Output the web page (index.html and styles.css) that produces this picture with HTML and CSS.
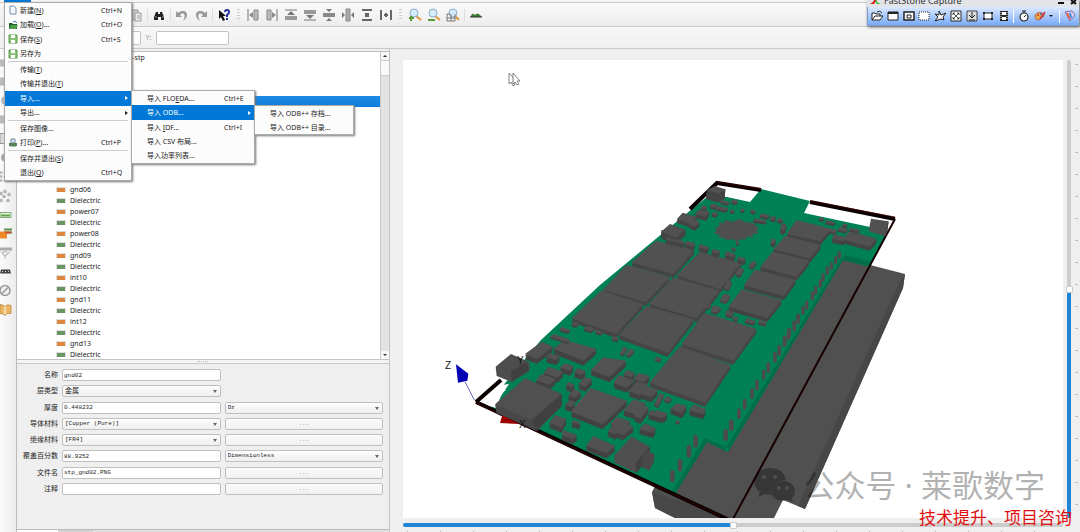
FILE: index.html
```html
<!DOCTYPE html>
<html lang="zh-CN">
<head>
<meta charset="utf-8">
<title>gnd02</title>
<link rel="stylesheet" href="styles.css">
</head>
<body>
<div class="app">
  <div class="menubar"><span class="menubar-active"></span></div>

  <div class="toolbar">
    <button class="tool" aria-label="粘贴"><svg viewBox="0 0 14 14"><path d="M2 2h7v10H2z" fill="#ccc" stroke="#999"/><path d="M6 5h6v8H6z" fill="#eee" stroke="#999"/><path d="M8 8h3M8 10h3" stroke="#999"/></svg></button>
    <i class="sep"></i>
    <button class="tool" aria-label="查找"><svg viewBox="0 0 14 14"><path d="M4 4h2v2h2V4h2l2 5v3H9V9H6v3H2V9z" fill="#222"/><path d="M4 8v2M11 8v2" stroke="#999"/></svg></button>
    <i class="sep"></i>
    <button class="tool" aria-label="撤销"><svg viewBox="0 0 14 14"><path d="M1 3v6h6L5 7c3-3 6-1 4 4l-1 2c6-4 5-11-1-10-2 0-3 1-4 2z" fill="#999"/></svg></button>
    <button class="tool" aria-label="重做"><svg viewBox="0 0 14 14"><path d="M13 3v6H7l2-2C6 4 3 6 5 11l1 2C0 9 1 2 7 3c2 0 3 1 4 2z" fill="#999"/></svg></button>
    <i class="sep"></i>
    <button class="tool" aria-label="这是什么"><svg viewBox="0 0 14 14"><path d="M2 2v9l2-2 2 4 2-1-2-4h3z" fill="#111"/><path d="M8 4q0-2 2-2t2 2-2 3v2M10 10v2" fill="none" stroke="#2330a0" stroke-width="2"/></svg></button>
    <i class="grip"></i>
    <button class="tool" aria-label="左对齐"><svg viewBox="0 0 14 14"><path d="M2 1v12" stroke="#777"/><path d="M8 2h4v10H8z" fill="#bbb" stroke="#888"/><path d="M7 4v6L3 7z" fill="#888"/></svg></button>
    <button class="tool" aria-label="右对齐"><svg viewBox="0 0 14 14"><path d="M12 1v12" stroke="#777"/><path d="M2 2h4v10H2z" fill="#bbb" stroke="#888"/><path d="M7 4v6l4-3z" fill="#888"/></svg></button>
    <button class="tool" aria-label="顶端对齐"><svg viewBox="0 0 14 14"><path d="M1 2h12" stroke="#777"/><path d="M1 8h12v4H1z" fill="#999"/><path d="M7 3l4 4H3z" fill="#777"/></svg></button>
    <button class="tool" aria-label="底端对齐"><svg viewBox="0 0 14 14"><path d="M1 12h12" stroke="#777"/><path d="M1 2h12v4H1z" fill="#999"/><path d="M7 11l4-4H3z" fill="#777"/></svg></button>
    <button class="tool" aria-label="垂直居中"><svg viewBox="0 0 14 14"><path d="M1 5h12v4H1z" fill="#888"/><path d="M7 4L4 1h6zM7 10l-3 3h6z" fill="#777"/></svg></button>
    <button class="tool" aria-label="水平居中"><svg viewBox="0 0 14 14"><path d="M5 1h4v12H5z" fill="#aaa" stroke="#888"/><path d="M4 7L1 4v6zM10 7l3-3v6z" fill="#777"/></svg></button>
    <button class="tool" aria-label="垂直分布"><svg viewBox="0 0 14 14"><path d="M2 2h10M2 12h10" stroke="#666" stroke-width="2"/><path d="M5 5h4v4H5z" fill="#666"/></svg></button>
    <button class="tool" aria-label="水平分布"><svg viewBox="0 0 14 14"><path d="M2 2v10M12 2v10" stroke="#666" stroke-width="2"/><path d="M7 5v4M5 7h4" stroke="#666" stroke-width="2"/></svg></button>
    <i class="grip"></i>
    <button class="tool" aria-label="放大"><svg viewBox="0 0 14 14"><path d="M8 8l5 4" stroke="#dd9a3c" stroke-width="2"/><circle cx="6" cy="5" r="4" fill="#d6ecfa" stroke="#8ab0cc"/><path d="M3 8v5M1 10h5" stroke="#5a9a32" stroke-width="2"/></svg></button>
    <button class="tool" aria-label="缩小"><svg viewBox="0 0 14 14"><path d="M8 8l5 4" stroke="#dd9a3c" stroke-width="2"/><circle cx="6" cy="5" r="4" fill="#d6ecfa" stroke="#8ab0cc"/><path d="M1 12h7" stroke="#5a9a32" stroke-width="2"/></svg></button>
    <button class="tool" aria-label="适合窗口"><svg viewBox="0 0 14 14"><path d="M9 8l4 4" stroke="#dd9a3c" stroke-width="2"/><circle cx="7" cy="5" r="4" fill="#d6ecfa" stroke="#8ab0cc"/><path d="M1 6h3M1 6v7h8V6M1 10h8M5 6v7" fill="none" stroke="#777"/></svg></button>
    <i class="sep"></i>
    <button class="tool" aria-label="网格"><svg viewBox="0 0 14 14"><path d="M2 8q1-4 4-1 2-3 5 0l2 2H1z" fill="#3e7d35"/><path d="M1 9h12" stroke="#333"/></svg></button>
  </div>

  <div class="coordbar">
    <input class="coord coord-x" aria-label="X">
    <label class="coord-label" for="coord-y">Y:</label>
    <input class="coord" id="coord-y">
  </div>

  <div class="work">
    <div class="rail">
      <svg viewBox="0 0 14 14"><path d="M0 4h10v7H0z" fill="#bbb"/></svg>
      <svg viewBox="0 0 14 14"><path d="M0 3h9v8H0z" fill="#bbb"/></svg>
      <svg viewBox="0 0 14 14"><circle cx="5" cy="7" r="4" fill="#bbb"/></svg>
      <svg viewBox="0 0 14 14"><path d="M0 3h8v8H0z" fill="#bbb"/></svg>
      <svg viewBox="0 0 14 14"><path d="M0 2h8v10H0z" fill="#ddd" stroke="#999"/></svg>
      <svg viewBox="0 0 14 14"><circle cx="5" cy="7" r="4" fill="#aaa"/></svg>
      <svg viewBox="0 0 14 14"><g fill="#bbb"><circle cx="1" cy="3" r="1.500"/><circle cx="5" cy="3" r="1.500"/><circle cx="10" cy="3" r="1.500"/><circle cx="1" cy="7" r="1.500"/><circle cx="5" cy="7" r="1.500"/><circle cx="10" cy="7" r="1.500"/><circle cx="1" cy="11" r="1.500"/><circle cx="5" cy="11" r="1.500"/><circle cx="10" cy="11" r="1.500"/></g></svg>
      <svg viewBox="0 0 14 14"><g fill="#bbb" stroke="#999" stroke-width=".5"><circle cx="1" cy="5" r="1.500"/><circle cx="5" cy="3" r="1.500"/><circle cx="9" cy="6" r="1.500"/><circle cx="4" cy="8" r="1.500"/><circle cx="1" cy="12" r="1.500"/><circle cx="8" cy="12" r="1.500"/></g></svg>
      <svg viewBox="0 0 14 14"><path d="M0 5h11v5H0z" fill="#e6f3df" stroke="#8aa884"/><path d="M1 8h9" stroke="#5aa846" stroke-width="2"/></svg>
      <svg viewBox="0 0 14 14"><path d="M4 3h8M4 6h8" stroke="#5c9348" stroke-width="2"/><path d="M0 5h7v7H0z" fill="#f08a28"/><path d="M5 6h6" stroke="#d04f2a" stroke-width="2"/></svg>
      <svg viewBox="0 0 14 14"><path d="M0 2h12v3H0z" fill="#aaa"/><path d="M1 6q4 7 9 0M5 7v6" fill="none" stroke="#aaa"/><circle cx="5" cy="8" r="2" fill="#fff" stroke="#aaa"/></svg>
      <svg viewBox="0 0 14 14"><path d="M0 9l1-4h9l1 4z" fill="#444"/><path d="M2 7h1M5 7h1M8 7h1" stroke="#ddd"/></svg>
      <svg viewBox="0 0 14 14"><circle cx="5" cy="7" r="5" fill="#eee" stroke="#999" stroke-width="1.500"/><path d="M2 10l6-6" stroke="#999" stroke-width="1.500"/></svg>
      <svg viewBox="0 0 14 14"><path d="M0 2q3 0 5 2 2-3 6-1v8q-4-1-6 2-2-2-5-2z" fill="#eab766" stroke="#b67c34" stroke-width=".7"/><path d="M5 4v8" stroke="#fff"/></svg>
    </div>

    <div class="dock">
      <div class="tree-frame">
        <ul class="tree">
          <li class="root">z-stp</li><li></li><li></li><li></li>
          <li class="selected"></li><li></li><li></li><li></li><li></li><li></li><li></li>
          <li class="diel">Dielectric</li>
          <li class="metal">gnd06</li><li class="diel">Dielectric</li>
          <li class="metal">power07</li><li class="diel">Dielectric</li>
          <li class="metal">power08</li><li class="diel">Dielectric</li>
          <li class="metal">gnd09</li><li class="diel">Dielectric</li>
          <li class="metal">int10</li><li class="diel">Dielectric</li>
          <li class="metal">gnd11</li><li class="diel">Dielectric</li>
          <li class="metal">int12</li><li class="diel">Dielectric</li>
          <li class="metal">gnd13</li><li class="diel">Dielectric</li>
        </ul>
        <div class="scrollbar"><button class="arrow up" aria-label="向上"></button><span class="scroll-thumb"></span><button class="arrow down" aria-label="向下"></button></div>
      </div>
      <div class="splitter"><i></i></div>
      <form class="props">
        <label for="f1">名称</label><input id="f1" value="gnd02"><span></span>
        <label for="f2">层类型</label><div class="combo cjk"><select id="f2"><option>金属</option></select></div><span></span>
        <label for="f3">厚度</label><input id="f3" value="0.448232"><div class="combo"><select aria-label="厚度单位"><option>Oz</option></select></div>
        <label for="f4">导体材料</label><div class="combo"><select id="f4"><option>[Copper (Pure)]</option></select></div><button type="button">...</button>
        <label for="f5">绝缘材料</label><div class="combo"><select id="f5"><option>[FR4]</option></select></div><button type="button">...</button>
        <label for="f6">覆盖百分数</label><input id="f6" value="88.9252"><div class="combo"><select aria-label="覆盖单位"><option>Dimensionless</option></select></div>
        <label for="f7">文件名</label><input id="f7" value="stp_gnd02.PNG"><button type="button">...</button>
        <label for="f8">注释</label><input id="f8"><button type="button">...</button>
      </form>
      <div class="tabs"><i class="tab-on"></i><i class="tab-off"></i></div>
    </div>

    <div class="view">
      <div class="canvas">
        <svg class="scene" viewBox="403 60 660 458" preserveAspectRatio="xMidYMid slice">
          <defs>
            <path id="chips" d="M468 32L583 60 520 132 395 97ZM600 66L724 98 660 178 530 136ZM380 104L510 142 438 216 308 180ZM520 142L658 182 590 265 447 222ZM303 182L430 222 348 312 215 265ZM440 228L581 268 503 368 356 315ZM612 248L770 296 700 392 545 343ZM540 348L692 405 615 518 448 458Z"/>
            <path id="mid" d="M195 330L290 357 250 392 160 356ZM125 335L160 350 110 386 75 372ZM148 370l32 8-12 12-30-8ZM310 382L380 392 328 442 272 420ZM272 474L382 512 308 583 213 545ZM484 0L560 0 530 22 484 12ZM145 410l45 15-18 18-42-14ZM125 432l42 15-18 18-42-14ZM380 420l25 8-10 14-26-8ZM355 435l48 16-22 22-40-14ZM415 428l34 10-16 18-32-8ZM412 452l34 14-26 30-34-12ZM444 470l30 10-20 22-30-10ZM400 508l38 12-30 34-38-12ZM425 525l22 8-26 34-18-8ZM470 540l32 10-10 14-32-8ZM530 520l30 8-14 22-36-14ZM582 523l35 14-8 16-42-12ZM350 560l42 14-26 22-34-14ZM195 400l26 8-12 14-30-10ZM232 415l26 8-12 12-24-8ZM255 442l22 6-20 22-22-8ZM205 456l20 8-10 8-18-6ZM222 478l22 8-18 18-22-8ZM210 510l16 6-10 16-22-8Z"/>
            <path id="tiny" d="M528 28l22 6-8 10-24-6ZM560 34l24 6-8 10-24-6ZM603 46l24 6-6 12-24-6ZM640 58l20 6-6 8-20-6ZM682 65l25 8-8 10-25-8ZM718 80l18 5-6 8-18-5ZM760 92l10 4-14 14-10-4ZM718 112l14 5-12 20-14-5ZM682 150l14 5-10 24-14-5ZM672 190l20 7-14 20-18-6ZM640 225l24 8-14 16-18-5ZM680 240l22 6-8 14-18-6ZM740 264l26 8-6 10-26-8ZM778 270l22 6-6 8-20-6ZM220 275l16 5-8 8-14-5ZM258 288l24 6-6 10-24-6ZM290 300l18 6-5 5-18-5ZM186 290l26 10-12 6-22-9ZM162 312l46 16-6 8-52-16ZM340 318l16 6-5 7-16-5ZM370 350l12 5-12 18-10-4ZM390 356l14 6-16 16-10-4ZM470 380l14 5-6 7-14-5ZM480 490l12 4-18 34-12-5ZM500 500l16 5-10 10-14-5ZM530 570l10 3-5 5-9-3ZM700 258l15 5-5 8-12-4ZM625 222l9 3-9 10-9-4Z"/>
            <path id="far" d="M470 180L573 206 540 244 440 222ZM435 228L543 254 510 296 400 268ZM398 275L508 302 470 350 360 322ZM345 328L467 360 432 408 312 376ZM305 388L425 420 382 474 265 440ZM630 213L710 236 690 260 608 238ZM90 192L135 208 108 234 65 214ZM128 158L172 172 150 190 110 178ZM155 178l25 8-15 14-20-8ZM582 222l36 10-8 12-34-8ZM180 146l28 8-10 16-34-8ZM82 230l22 8-6 8-22-8ZM108 236l25 8-6 8-25-8ZM140 242l25 8-6 10-25-8ZM180 252l25 8-4 10-25-8ZM220 267l20 6-6 8-20-6ZM260 274l26 8-6 10-26-8ZM297 290l20 6-6 8-20-6ZM426 188l14 6-8 20-12-6ZM396 235l12 4-8 12-8-4Z"/>
            <path id="dust" d="M245 120l24 6-6 6-24-6ZM280 118l14 4-6 8-16-4ZM215 130l20 5-8 10-18-5ZM235 138l30 6-8 8-30-6ZM190 135l12 4-8 9-12-4ZM220 155l14 4-6 8-14-4ZM365 160l25 5-8 8-24-5ZM395 168l14 3-6 10-14-3ZM415 174l14 4-5 7-14-3ZM345 175l36 7-8 6-34-6ZM335 148l12 4-5 6-12-4ZM305 145l9 3-4 6-9-3ZM275 148l10 3-8 6-8-3ZM560 180l26 7-6 6-25-6ZM540 172l12 3-4 5-12-3ZM570 205l22 6-8 8-20-5ZM600 200l24 6-7 9-24-6ZM632 203l28 7-5 5-30-7ZM610 190l13 3-4 6-13-3ZM290 245l8 3-3 5-8-3ZM278 262l10 4-4 4-10-4ZM335 305l14 5-12 13-10-4Z"/>
            <path id="near" d="M490 288L556 318 530 340 468 318ZM375 225l34 12-15 26-36-15ZM400 270l42 16-14 12-32-12ZM645 250l32 14-8 15-42-12ZM575 245l36 15-32 26-24-10ZM555 250l24 8-22 26-24-10ZM665 210l35 14-8 10-38-12ZM430 240l22 7-6 6-22-7Z"/>
          </defs>
          <!-- enclosure slab under the board -->
          <path d="M843 258L905 274 903 288 805 509 783 500 774 518H675L655 508 652 492 690 420Z" fill="#505050"/>
          <path d="M905 274L903 288 805 509 798 506 898 285Z" fill="#474747"/>
          <path d="M652 492L735 518H675L655 508Z" fill="#484848"/>
          <!-- board -->
          <path d="M761 189L810 201 804 213 870 227 888 231 870 267 843 260 728 452 707 442 675 494 484 405 506 390 501 388 541 340 600 285 692 209 707 197 727 197 750 202Z" fill="#008055"/>
          <path d="M485 405L501 385 509 384 501 396 496 408Z" fill="#fff"/>
          <path d="M843 260L870 267 872 262 845 255 838 264 725 449 728 452ZM707 442L675 494 672 491 705 438 728 448V452Z" fill="#006f49"/>
          <!-- bounding frame -->
          <path d="M761 190L717 183 690 209M810 202L895 219M501 380L476 402" fill="none" stroke="#0a0000" stroke-width="4"/>
          <path d="M476 402L727 519" fill="none" stroke="#0a0000" stroke-width="4"/>
          <path d="M895 219L733 519" fill="none" stroke="#160000" stroke-width="2"/>
          <path d="M717 182L761 189M810 201L895 217M476 403L720 516" fill="none" stroke="#500" stroke-width=".6"/>

          <!-- memory packages and central components -->
          <g transform="translate(500 230) scale(.3333)">
            <g fill="#454545"><use href="#chips" y="12"/><use href="#chips" y="8"/><use href="#chips" y="4"/></g>
            <use href="#chips" fill="#515151"/>
            <g fill="#424242"><use href="#mid" y="15"/><use href="#mid" y="10"/><use href="#mid" y="5"/></g>
            <use href="#mid" fill="#525252"/>
            <g fill="#444"><use href="#tiny" y="6"/><use href="#tiny" y="3"/></g>
            <use href="#tiny" fill="#525252"/>
            <path d="M895 256v18M883 276v19M868 298v20M855 322v20M838 350v22M825 371v22M805 402v22M791 424v20M771 454v22M756 480v22M734 512v22M717 540v22M693 573v22" stroke="#4c4c4c" stroke-width="11" stroke-linecap="round"/>
          </g>

          <!-- far end -->
          <g transform="translate(640 160) scale(.3333)">
            <g fill="#444"><use href="#far" y="12"/><use href="#far" y="8"/><use href="#far" y="4"/></g>
            <use href="#far" fill="#515151"/>
            <path d="M225 78L256 88 254 116 234 128 198 117 201 90ZM693 176L746 184 742 214 735 229 686 214Z" fill="#505050"/>
            <path d="M256 88L235 101 234 128 254 116ZM746 184L738 202 735 229 742 214ZM201 90l34 11v27l-36-11Z" fill="#444"/>
            <path d="M238 188l14 2 5-10 20 6 20-8 18 8 32 5-3 8 13 2-8 12 6 5-20 5 4 8-18-2-6 10-16-2-6 9-16-9-16 3-8-6-18-2 7-8-19-3 8-10-6-8 14-4Z" fill="#4f4f4f" stroke="#405a50" stroke-dasharray="5 3" stroke-width="3"/>
            <g fill="#444"><use href="#dust" y="6"/><use href="#dust" y="3"/></g>
            <use href="#dust" fill="#525252"/>
            <path d="M598 278v14M587 293v15M574 311v15M562 324v16M549 344v16M541 362v16M527 382v18M517 398v19M500 426v18M489 442v18M474 470v18M463 492v18M445 516v20M433 536v20" stroke="#4c4c4c" stroke-width="10" stroke-linecap="round"/>
          </g>

          <!-- near corner -->
          <g transform="translate(430 340) scale(.3333)">
            <path d="M78 73L115 101 112 122 84 128Z" fill="#0000b4"/><path d="M105 125L133 180" stroke="#6868c0" stroke-width="3"/>
            <path d="M217 225L268 252 210 249Z" fill="#900"/>
            <path d="M243 42L298 66 299 92 245 126 200 108 197 80Z" fill="#4d4d4d"/><path d="M290 66L298 90 245 126 243 95Z" fill="#404040"/>
            <path d="M285 115L395 162 396 195 322 272 200 218 196 192Z" fill="#505050"/><path d="M395 162L396 198 318 272 305 240Z" fill="#404040"/><path d="M196 194l110 46 12 32-118-54Z" fill="#484848"/>
            <g fill="#424242"><use href="#near" y="15"/><use href="#near" y="10"/><use href="#near" y="5"/></g>
            <use href="#near" fill="#515151"/>
            <path d="M605 290L660 320 658 345 620 398 553 368V345Z" fill="#4f4f4f"/><path d="M660 320V345L620 398 615 370Z" fill="#414141"/><path d="M650 328l24 16-2 20-14 28-25-12 5-30Z" fill="#494949"/>
            <path d="M797 292v24M777 322v24M750 364v24M727 396v24M887 274v22M904 246v20" stroke="#4c4c4c" stroke-width="14" stroke-linecap="round"/>
          </g>
          <g class="axis"><text x="445" y="369">Z</text><text x="517" y="364">Y</text><text x="519" y="428">X</text></g>
          <g fill="#fff" stroke="#666" stroke-width=".8"><path d="M509 73v11l2-2 2 4 2-1-2-4h3z"/><path d="M513 73v11l2-2 2 3 2-1-2-3h3z"/></g>
        </svg>
      </div>
      <input class="slider slider-v" type="range" value="50" aria-label="垂直旋转">
      <div class="ticks-v"></div>
      <input class="slider slider-h" type="range" value="50" aria-label="水平旋转">
      <div class="ticks-h"></div>
    </div>
  </div>
</div>

<div class="watermark">
  <svg viewBox="0 0 42 34"><path fill-rule="evenodd" d="M16 0C7 0 0 6 0 13q0 7 6 11L4 29l7-3 6 1q-1-14 15-15Q29 0 16 0zM10 7a2 2 0 1 1 0 4 2 2 0 0 1 0-4zm11 0a2 2 0 1 1 0 4 2 2 0 0 1 0-4z"/><path fill-rule="evenodd" d="M29 13C21 13 17 18 17 23s5 10 12 10l5-1 5 2-1-4q3-3 3-7c0-5-5-10-12-10zm-4 5a2 2 0 1 1 0 4 2 2 0 0 1 0-4zm8 0a2 2 0 1 1 0 4 2 2 0 0 1 0-4z"/></svg>
  <span>公众号 · 莱歌数字</span>
</div>
<div class="slogan">技术提升、项目咨询</div>

<ul class="menu menu-file">
  <li><button><svg viewBox="0 0 10 10"><path d="M2 1h4l2 2v6H2z" fill="#f4f8fd" stroke="#7a8fae"/></svg><span>新建(<u>N</u>)</span><kbd>Ctrl+N</kbd></button></li>
  <li><button><svg viewBox="0 0 10 10"><path d="M1 3h3l1 1h4v5H1z" fill="#1f5c2a"/><path d="M3 5h7L8 9H1z" fill="#4da04a"/><path d="M5 2q2-2 4 1" stroke="#3b79a8" fill="none"/></svg><span>加载(<u>O</u>)...</span><kbd>Ctrl+O</kbd></button></li>
  <li><button><svg viewBox="0 0 10 10"><path d="M1 1h8v8H1z" fill="#8dc47c" stroke="#5a9a4c"/><path d="M3 1h4v3H3zM3 6h4v3H3z" fill="#fff"/></svg><span>保存(<u>S</u>)</span><kbd>Ctrl+S</kbd></button></li>
  <li><button><svg viewBox="0 0 10 10"><path d="M1 1h8v8H1z" fill="#8dc47c" stroke="#5a9a4c"/><path d="M3 1h4v3H3zM3 6h4v3H3z" fill="#fff"/></svg><span>另存为</span></button></li>
  <li class="rule"></li>
  <li><button><span>传输(<u>T</u>)</span></button></li>
  <li><button><span>传输并退出(<u>T</u>)</span></button></li>
  <li class="on sub"><button><span>导入...</span></button></li>
  <li class="sub"><button><span>导出...</span></button></li>
  <li class="rule"></li>
  <li><button><span>保存图像...</span></button></li>
  <li><button><svg viewBox="0 0 10 10"><path d="M3 1h4v4H3z" fill="#cfe3f5" stroke="#789"/><path d="M1 5h8v3H1z" fill="#5d7f5a"/><path d="M2 8h6v1H2z" fill="#9c9"/></svg><span>打印(<u>P</u>)...</span><kbd>Ctrl+P</kbd></button></li>
  <li class="rule"></li>
  <li><button><span>保存并退出(<u>S</u>)</span></button></li>
  <li><button><span>退出(<u>Q</u>)</span><kbd>Ctrl+Q</kbd></button></li>
</ul>
<ul class="menu menu-import">
  <li><button><span>导入 FLO<u>E</u>DA...</span><kbd>Ctrl+E</kbd></button></li>
  <li class="on sub"><button><span>导入 ODB...</span></button></li>
  <li><button><span>导入 <u>I</u>DF...</span><kbd>Ctrl+I</kbd></button></li>
  <li><button><span>导入 CSV 布局...</span></button></li>
  <li><button><span>导入功率列表...</span></button></li>
</ul>
<ul class="menu menu-odb">
  <li><button><span>导入 ODB++ 存档...</span></button></li>
  <li><button><span>导入 ODB++ 目录...</span></button></li>
</ul>

<div class="capture">
  <div class="capture-title"><svg viewBox="0 0 12 4"><path d="M0 4q4-1 5-4h3L5 4z" fill="#d22"/><path d="M7 0q1 3 5 4H8L6 1z" fill="#2b2"/></svg><span>FastStone Capture</span><svg class="win" viewBox="0 0 22 7"><path d="M1 3h6" stroke="#111" stroke-width="2"/><path d="M14 0l5 4M19 0l-5 4" stroke="#111" stroke-width="2"/></svg></div>
  <div class="capture-tools">
    <button aria-label="打开"><svg viewBox="0 0 12 12"><path d="M1 10V3h3l1 1h4v2M1 10l3-4h8l-3 4zM6 2q3-2 5 1" fill="#fff" stroke="#222"/></svg></button>
    <button aria-label="活动窗口"><svg viewBox="0 0 12 12"><path d="M1 2h10v8H1z" fill="#fff" stroke="#222"/><path d="M1 3h10" stroke="#222" stroke-width="2"/></svg></button>
    <button aria-label="窗口对象"><svg viewBox="0 0 12 12"><path d="M1 2h10v8H1z" fill="#fff" stroke="#222" stroke-width="1.500"/><path d="M4 5h4v3H4z" fill="#fff" stroke="#222"/></svg></button>
    <button aria-label="矩形区域"><svg viewBox="0 0 12 12"><path d="M1 2h10v8H1z" fill="#fff" stroke="#222" stroke-dasharray="1 1"/></svg></button>
    <button aria-label="手绘区域"><svg viewBox="0 0 12 12"><path d="M5 1l2 4 5-2-3 4 1 3-3-1-6 2 3-4-3-3 4 1z" fill="#fff" stroke="#222"/></svg></button>
    <button aria-label="全屏"><svg viewBox="0 0 12 12"><path d="M1 1h10v10H1z" fill="#fff" stroke="#222"/><path d="M3 5V3h2M7 3h2v2M9 7v2H7M5 9H3V7M3 3l6 6M9 3L3 9" fill="none" stroke="#222" stroke-width=".8"/></svg></button>
    <button aria-label="滚动窗口"><svg viewBox="0 0 12 12"><path d="M1 1h10v10H1z" fill="#ddd" stroke="#444"/><path d="M6 2v6M3 5l3 3 3-3M3 10h6" fill="none" stroke="#222"/></svg></button>
    <button aria-label="固定区域"><svg viewBox="0 0 12 12"><path d="M2 3h8v6H2z" fill="#fff" stroke="#222"/><path d="M1 2h2v2H1zM9 2h2v2H9zM1 8h2v2H1zM9 8h2v2H9z" fill="#222"/></svg></button>
    <button aria-label="录屏"><svg viewBox="0 0 12 12"><path d="M2 1h8v10H2z" fill="#222"/><path d="M4 2h4v3H4zM4 7h4v3H4z" fill="#fff"/><path d="M3 2v8M9 2v8" stroke="#fff" stroke-dasharray="1 1"/></svg></button>
    <i></i>
    <button aria-label="延时"><svg viewBox="0 0 12 12"><circle cx="6" cy="7" r="4" fill="#fff" stroke="#222" stroke-width="1.200"/><path d="M6 7l2-2M4 1h4M6 1v2" stroke="#222"/></svg></button>
    <button aria-label="输出"><svg viewBox="0 0 12 12"><path d="M1 6c0-4 8-5 9-1 1 3-3 1-3 3s-6 4-6-2z" fill="#e9a64a" stroke="#a66"/><circle cx="4" cy="5" r="1" fill="#d33"/><circle cx="7" cy="4" r="1" fill="#36c"/><path d="M11 2L6 9" stroke="#c33" stroke-width="1.500"/></svg></button>
    <b></b>
    <i></i>
    <button aria-label="设置"><svg viewBox="0 0 12 12"><path d="M1 2l7-1 3 4-5 6z" fill="#d9d4f2" stroke="#86a"/><path d="M3 3l3 6" stroke="#e64" stroke-width="2"/><path d="M6 3l1 5" stroke="#48d" stroke-width="2"/></svg></button>
  </div>
</div>
</body>
</html>
```
FILE: styles.css
```css
* { box-sizing: border-box; }

body {
  margin: 0;
  background: #efefef;
  color: #222;
  font: 7px/11px "Noto Sans", "Noto Sans CJK SC", sans-serif;
  overflow: hidden;
}

button, input, select { font: inherit; color: inherit; margin: 0; padding: 0; }
ul { list-style: none; margin: 0; padding: 0; }
svg { display: block; }

.app { display: flex; flex-direction: column; height: 100vh; }

.menubar { height: 3px; padding-left: 4px; background: #f5f5f5; border-bottom: 1px solid #c9c9c9; }
.menubar-active { display: block; width: 27px; height: 2px; background: #0078d7; }

.toolbar {
  display: flex;
  align-items: center;
  height: 24px;
  padding: 0 0 0 126px;
  background: linear-gradient(#fafafa, #ededed);
  border-bottom: 1px solid #c9c9c9;
}
.tool { display: grid; place-items: center; width: 19px; height: 20px; border: 0; background: none; }
.tool svg { width: 14px; height: 14px; }
.sep { width: 4px; height: 12px; background: linear-gradient(#ddd, #ddd) center / 1px 100% no-repeat; }
.grip { width: 10px; height: 12px; background: repeating-linear-gradient(#ccc 0 1px, transparent 1px 3px) center / 3px 100% no-repeat; }

.coordbar {
  display: flex;
  align-items: center;
  height: 22px;
  padding-left: 68px;
  background: linear-gradient(#f8f8f8, #efefef);
  border-bottom: 1px solid #c9c9c9;
}
.coord { width: 73px; height: 14px; background: #fff; border: 1px solid #c4c4c4; border-radius: 2px; }
.coord-label { width: 15px; text-align: center; color: #999; }

.work { flex: 1; min-height: 0; display: grid; grid-template-columns: 16px minmax(0, 374fr) minmax(0, 690fr); }

.rail { display: flex; flex-direction: column; padding-top: 4px; background: linear-gradient(to right, #fafafa, #ececec); overflow: hidden; }
.rail svg { flex: none; width: 14px; height: 19px; }

.dock { display: flex; flex-direction: column; min-height: 0; padding-top: 2px; border-left: 1px solid #bbb; border-right: 1px solid #c4c4c4; }
.tree-frame { flex: 1; min-height: 0; display: flex; background: #fff; border-top: 1px solid #bbb; border-bottom: 1px solid #c4c4c4; }
.tree { flex: 1; overflow: hidden; }
.tree li { display: flex; align-items: center; gap: 4px; height: 11px; padding-left: 39px; white-space: nowrap; }
.tree .root { padding-left: 112px; }
.tree .selected { background: linear-gradient(#1c8ae4, #0f7ddb); }
.tree .metal::before, .tree .diel::before { content: ""; width: 8px; height: 4px; border: 1px solid #ddd; border-bottom: 0; }
.tree .metal::before { background: #dd8740; }
.tree .diel::before { background: #689560; }

.scrollbar { display: flex; flex-direction: column; width: 9px; background: #e3e3e3; border-left: 1px solid #c9c9c9; }
.scroll-thumb { height: 16px; background: #fafafa; border: 1px solid #ccc; border-width: 1px 0; }
.arrow { display: grid; place-items: center; height: 8px; background: #f7f7f7; border: 0; }
.arrow::before { content: ""; border: 2px solid transparent; }
.arrow.up::before { border-top-width: 0; border-bottom-color: #333; }
.arrow.down { margin-top: auto; }
.arrow.down::before { border-bottom-width: 0; border-top-color: #333; }

.splitter { display: grid; place-items: center; height: 3px; background: #f4f4f4; }
.splitter i { width: 10px; border-top: 1px dotted #bbb; }

.props {
  display: grid;
  grid-template-columns: 41px minmax(0, 1fr) minmax(0, 1fr);
  grid-auto-rows: 12px;
  align-content: space-between;
  column-gap: 4px;
  height: 167px;
  padding: 5px 6px 34px 0;
  border-top: 1px solid #c9c9c9;
  border-bottom: 1px solid #bbb;
}
.props label { text-align: right; line-height: 12px; white-space: nowrap; }
.props input, .props select, .props button {
  width: 100%;
  height: 12px;
  border: 1px solid #c0c0c0;
  border-radius: 2px;
  font: 6px/10px "Liberation Mono", "Noto Sans CJK SC", monospace;
}
.props input { background: #fff; padding: 0 1px; }
.props select { appearance: none; background: linear-gradient(#fdfdfd, #efefef); padding: 0 2px; display: block; }
.props .cjk select { font-size: 7px; }
.props button { background: linear-gradient(#fbfbfb, #f0f0f0); color: #888; }
.combo { position: relative; }
.combo::after { content: ""; position: absolute; right: 4px; top: 5px; border: 2px solid transparent; border-top: 3px solid #666; border-bottom: 0; }

.tabs { display: flex; height: 2px; background: #e0e0e0; }
.tab-on { width: 41px; background: #fff; }
.tab-off { width: 35px; background: #d0d0d0; }

.view {
  display: grid;
  grid-template: minmax(0, 1fr) 14px / minmax(0, 1fr) 12px 5px;
  min-height: 0;
  padding: 11px 0 0 13px;
}
.canvas { background: #fff; overflow: hidden; }
.scene { width: 100%; height: 100%; }
.axis { font: 10px "Liberation Sans", sans-serif; fill: #111; }

.slider { appearance: none; margin: 0; border-radius: 2px; }
.slider::-webkit-slider-thumb { appearance: none; width: 7px; height: 7px; background: #fff; border: 1px solid #ccc; border-radius: 1px; }
.slider-v { writing-mode: vertical-lr; direction: rtl; width: 4px; height: 100%; justify-self: center; background: linear-gradient(#ccc 50%, #1f86d8 50%); }
.slider-h { width: 100%; height: 4px; align-self: center; grid-row: 2; grid-column: 1; background: linear-gradient(to right, #1f86d8 50%, #ccc 50%); }
.ticks-v { background: repeating-linear-gradient(transparent 0 4px, #bbb 4px 5px, transparent 5px 22px) left / 3px 100% no-repeat; }
.ticks-h { grid-row: 2; grid-column: 1; align-self: end; height: 1px; background: repeating-linear-gradient(to right, transparent 0 4px, #bbb 4px 5px, transparent 5px 33px); }

.menu {
  position: absolute;
  display: flex;
  flex-direction: column;
  background: #fcfcfc;
  border: 1px solid #aaa;
  box-shadow: 1px 1px 2px #777;
}
.menu li { flex: 1; display: flex; }
.menu .rule { flex: none; height: 1px; margin: 0 3px; background: #ccc; }
.menu button { flex: 1; display: flex; align-items: center; padding: 0 6px 0 15px; border: 0; background: none; text-align: left; white-space: nowrap; position: relative; }
.menu svg { position: absolute; left: 3px; width: 10px; height: 10px; }
.menu kbd { width: 24px; margin-left: auto; font: inherit; }
.menu .on { background: #0078d7; color: #fff; }
.menu .sub button::after { content: ""; position: absolute; right: 3px; border: 2px solid transparent; border-left: 3px solid; border-right: 0; }
.menu-file { left: 4px; top: 2px; width: 128px; height: 179px; }
.menu-import { left: 131px; top: 90px; width: 124px; height: 74px; }
.menu-odb { left: 254px; top: 105px; width: 100px; height: 30px; }

.watermark { position: absolute; right: 35px; bottom: 30px; display: flex; align-items: center; gap: 8px; opacity: .3; color: #000; font: 31px/30px "Noto Sans", "Noto Sans CJK SC", sans-serif; white-space: nowrap; }
.watermark svg { width: 42px; height: 34px; }
.slogan { position: absolute; right: 8px; bottom: 6px; color: #e01010; font: 17px/18px "Noto Sans CJK SC", sans-serif; white-space: nowrap; }

.capture { position: absolute; right: 1px; top: 0; width: 212px; box-shadow: 1px 1px 3px #555; background: #e2e4e8; overflow: hidden; }
.capture-title { display: flex; gap: 3px; height: 7px; padding-left: 2px; overflow: hidden; font: 9px/1px "Noto Sans", sans-serif; color: #333; }
.capture-title svg { width: 12px; height: 4px; }
.capture-title .win { width: 22px; height: 7px; margin-left: auto; }
.capture-tools { display: flex; align-items: center; height: 19px; padding: 0 1px; background: linear-gradient(#dce9ff, #79abf8); border: 1px solid #7d9dcc; border-width: 0 0 1px 1px; }
.capture-tools button { display: grid; place-items: center; width: 16px; height: 16px; border: 0; background: none; }
.capture-tools svg { width: 12px; height: 12px; }
.capture-tools i { width: 1px; height: 13px; margin: 0 2px; background: #fff; }
.capture-tools b { border: 2px solid transparent; border-top-color: #111; border-bottom: 0; margin: 0 4px 0 1px; }
```
